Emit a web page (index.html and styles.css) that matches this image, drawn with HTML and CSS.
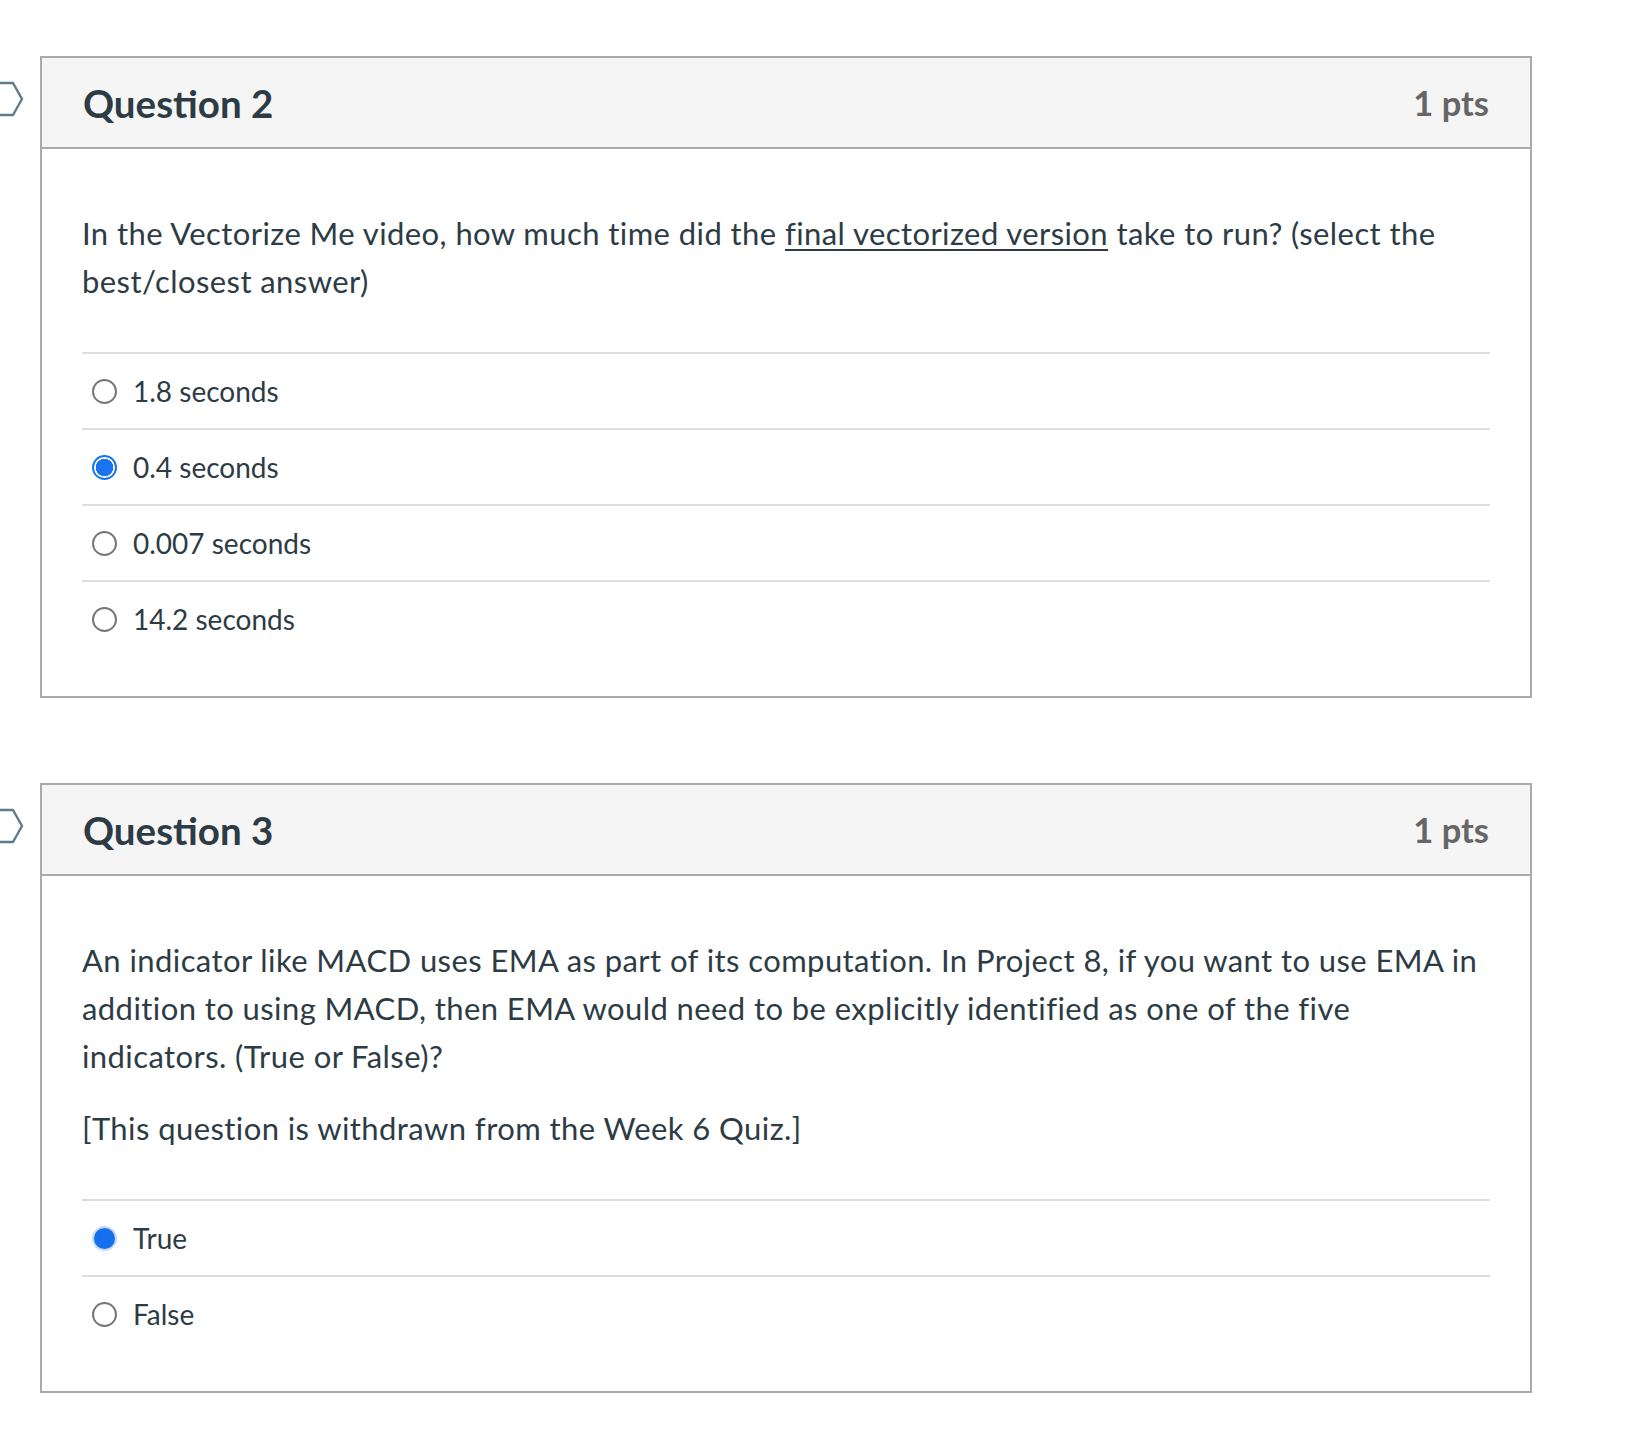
FILE: index.html
```html
<!DOCTYPE html>
<html lang="en">
<head>
<meta charset="utf-8">
<title>Quiz</title>
<link rel="stylesheet" href="styles.css">
</head>
<body>
<div class="quiz">
  <div class="question-wrap">
    <svg class="flag" width="24" height="36" viewBox="0 0 24 36"><path d="M-4 2 H13 L22 18 L13 34 H-4" fill="none" stroke="#5d7b8f" stroke-width="2.4" stroke-linejoin="round"/></svg>
    <div class="question">
      <div class="q-header">
        <span class="q-name">Question 2</span>
        <span class="q-pts">1 pts</span>
      </div>
      <div class="q-body">
        <div class="q-text">
          <p>In the Vectorize Me video, how much time did the <u>final vectorized version</u> take to run? (select the best/closest answer)</p>
        </div>
        <div class="answers">
          <label class="answer"><span class="radio"></span><span class="a-text">1.8 seconds</span></label>
          <label class="answer"><span class="radio checked"></span><span class="a-text">0.4 seconds</span></label>
          <label class="answer"><span class="radio"></span><span class="a-text">0.007 seconds</span></label>
          <label class="answer"><span class="radio"></span><span class="a-text">14.2 seconds</span></label>
        </div>
      </div>
    </div>
  </div>

  <div class="question-wrap">
    <svg class="flag" width="24" height="36" viewBox="0 0 24 36"><path d="M-4 2 H13 L22 18 L13 34 H-4" fill="none" stroke="#5d7b8f" stroke-width="2.4" stroke-linejoin="round"/></svg>
    <div class="question">
      <div class="q-header">
        <span class="q-name">Question 3</span>
        <span class="q-pts">1 pts</span>
      </div>
      <div class="q-body">
        <div class="q-text">
          <p>An indicator like MACD uses EMA as part of its computation. In Project 8, if you want to use EMA in addition to using MACD, then EMA would need to be explicitly identified as one of the five indicators. (True or False)?</p>
          <p>[This question is withdrawn from the Week 6 Quiz.]</p>
        </div>
        <div class="answers">
          <label class="answer"><span class="radio filled"></span><span class="a-text">True</span></label>
          <label class="answer"><span class="radio"></span><span class="a-text">False</span></label>
        </div>
      </div>
    </div>
  </div>
</div>
</body>
</html>
```

FILE: styles.css
```css
html, body {
  margin: 0;
  padding: 0;
  background: #ffffff;
}

body {
  font-family: Lato, "Liberation Sans", sans-serif;
  color: #2d3b45;
}

.quiz {
  padding: 56px 0 60px 40px;
  display: flex;
  flex-direction: column;
  gap: 85px;
  width: 1492px;
}

.question-wrap {
  position: relative;
}

.flag {
  position: absolute;
  left: -40px;
  top: 25px;
}

.question {
  border: 2px solid #aaaaaa;
  background: #fff;
}

.q-header {
  height: 89px;
  background: #f5f5f5;
  border-bottom: 2px solid #aaaaaa;
  display: flex;
  align-items: center;
  justify-content: space-between;
  padding: 0 41px 0 41px;
}

.q-name {
  font-size: 38.5px;
  font-weight: 700;
  color: #2d3b45;
}

.q-pts {
  font-size: 34.5px;
  font-weight: 700;
  color: #666666;
}

.q-body {
  padding: 60px 40px 40px 40px;
}

.q-text {
  font-size: 31px;
  letter-spacing: 0.42px;
  line-height: 48px;
  margin-bottom: 47px;
}

.q-text p {
  margin: 0 0 24px 0;
}

.q-text p:last-child {
  margin-bottom: 0;
}

.q-text u {
  text-decoration-thickness: 2px;
  text-underline-offset: 4px;
}

.answers {
  display: flex;
  flex-direction: column;
}

.answer {
  height: 74px;
  border-top: 2px solid #dddddd;
  display: flex;
  align-items: center;
  font-size: 28px;
}

.radio {
  width: 25px;
  height: 25px;
  box-sizing: border-box;
  border: 2px solid #777777;
  border-radius: 50%;
  margin-left: 10px;
  margin-right: 16px;
  flex: none;
  background: #fff;
}

.radio.checked {
  border: 2px solid #1a74f0;
  background: radial-gradient(circle, #1a74f0 0 8.5px, #ffffff 9px);
}

.radio.filled {
  border: 2px solid #c5dbfb;
  background: #1670ee;
}

.a-text {
  color: #2d3b45;
}
```
